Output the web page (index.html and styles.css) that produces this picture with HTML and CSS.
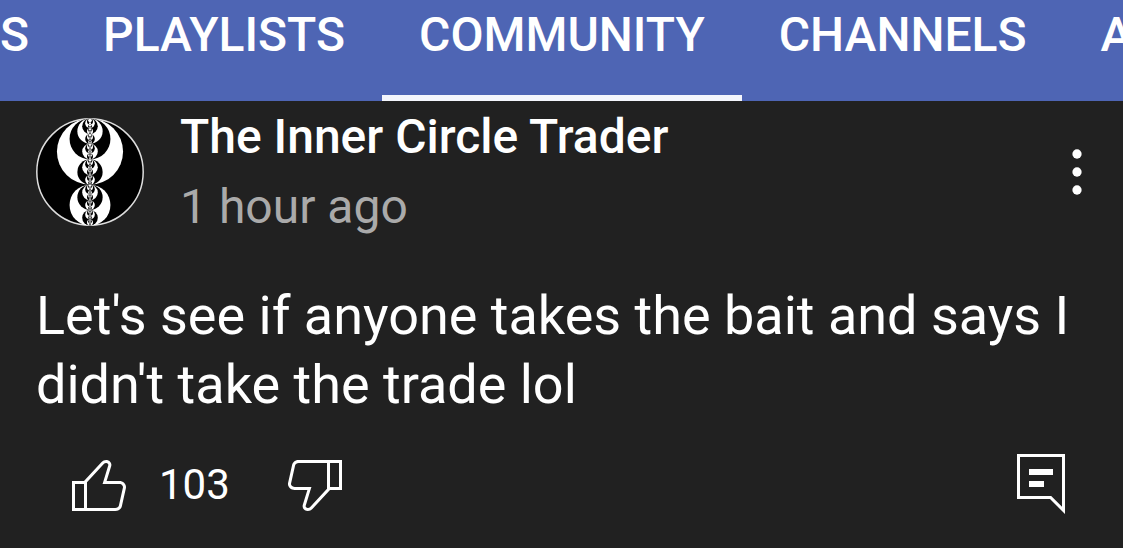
FILE: index.html
```html
<!DOCTYPE html>
<html lang="en">
<head>
  <meta charset="UTF-8">
  <meta name="viewport" content="width=device-width, initial-scale=1">
  <title>Community</title>
  <link rel="stylesheet" href="styles.css">
</head>
<body>
  <nav class="tabs">
    <a class="tab tab-first" href="#">S</a>
    <a class="tab" href="#">PLAYLISTS</a>
    <a class="tab active" href="#">COMMUNITY</a>
    <a class="tab" href="#">CHANNELS</a>
    <a class="tab" href="#">A</a>
  </nav>

  <article class="post">
    <header class="post-header">
      <!-- every circle holds two smaller ones of the other colour -->
      <svg class="avatar" viewBox="-54 -54 108 108" aria-hidden="true">
        <defs>
          <circle id="c7" cy="50" r="50" fill="#fff"/>
          <g id="c6"><circle cy="50" r="50" fill="#000"/><use href="#c7" transform="scale(.618)"/><use href="#c7" transform="translate(0 61.8) scale(.382)"/></g>
          <g id="c5"><circle cy="50" r="50" fill="#fff"/><use href="#c6" transform="scale(.618)"/><use href="#c6" transform="translate(0 61.8) scale(.382)"/></g>
          <g id="c4"><circle cy="50" r="50" fill="#000"/><use href="#c5" transform="scale(.618)"/><use href="#c5" transform="translate(0 61.8) scale(.382)"/></g>
          <g id="c3"><circle cy="50" r="50" fill="#fff"/><use href="#c4" transform="scale(.618)"/><use href="#c4" transform="translate(0 61.8) scale(.382)"/></g>
          <g id="c2"><circle cy="50" r="50" fill="#000"/><use href="#c3" transform="scale(.618)"/><use href="#c3" transform="translate(0 61.8) scale(.382)"/></g>
          <g id="c1"><circle cy="50" r="50" fill="#fff"/><use href="#c2" transform="scale(.618)"/><use href="#c2" transform="translate(0 61.8) scale(.382)"/></g>
        </defs>
        <circle r="53.2" fill="#000" stroke="#ddd" stroke-width="1.5"/>
        <g transform="translate(0 -53.5) scale(1.07)">
          <use href="#c1" transform="scale(.618)"/>
          <use href="#c1" transform="translate(0 61.8) scale(.382)"/>
        </g>
      </svg>
      <div class="author">
        <div class="name">The Inner Circle Trader</div>
        <div class="time">1 hour ago</div>
      </div>
      <button class="icon-button" aria-label="More">
        <svg class="icon" viewBox="0 0 24 24">
          <circle cx="12" cy="6" r="1.55"/>
          <circle cx="12" cy="12" r="1.55"/>
          <circle cx="12" cy="18" r="1.55"/>
        </svg>
      </button>
    </header>

    <p class="text">Let's see if anyone takes the bait and says I didn't take the trade lol</p>

    <footer class="actions">
      <button class="icon-button" aria-label="Like">
        <svg class="icon" viewBox="0 0 24 24">
          <path d="M18.77,11h-4.23l1.52-4.94C16.38,5.03,15.54,4,14.38,4c-0.58,0-1.14,0.24-1.52,0.65L7,11H3v10h4h1h9.43c1.06,0,1.98-0.67,2.19-1.61l1.34-6C21.23,12.15,20.18,11,18.77,11z M7,20H4v-8h3V20z M19.98,13.17l-1.34,6C18.54,19.65,18.03,20,17.43,20H8v-8.61l5.6-6.06C13.79,5.12,14.08,5,14.38,5c0.26,0,0.5,0.11,0.63,0.3c0.07,0.1,0.15,0.26,0.09,0.47l-1.52,4.94L13.18,12h1.35h4.23c0.41,0,0.8,0.17,1.03,0.46C19.92,12.61,20.05,12.86,19.98,13.17z"/>
        </svg>
      </button>
      <span class="count">103</span>
      <button class="icon-button" aria-label="Dislike">
        <svg class="icon" viewBox="0 0 24 24">
          <path transform="rotate(180 12 12.5)" d="M18.77,11h-4.23l1.52-4.94C16.38,5.03,15.54,4,14.38,4c-0.58,0-1.14,0.24-1.52,0.65L7,11H3v10h4h1h9.43c1.06,0,1.98-0.67,2.19-1.61l1.34-6C21.23,12.15,20.18,11,18.77,11z M7,20H4v-8h3V20z M19.98,13.17l-1.34,6C18.54,19.65,18.03,20,17.43,20H8v-8.61l5.6-6.06C13.79,5.12,14.08,5,14.38,5c0.26,0,0.5,0.11,0.63,0.3c0.07,0.1,0.15,0.26,0.09,0.47l-1.52,4.94L13.18,12h1.35h4.23c0.41,0,0.8,0.17,1.03,0.46C19.92,12.61,20.05,12.86,19.98,13.17z"/>
        </svg>
      </button>
      <button class="icon-button comment" aria-label="Comments">
        <svg class="icon" viewBox="0 0 24 24">
          <path fill-rule="evenodd" d="M4 2H20V22L15 17H4ZM5 3V16H15.4L19 19.6V3Z"/>
          <path d="M8 7h8v2H8zM8 11h5v2H8z"/>
        </svg>
      </button>
    </footer>
  </article>
</body>
</html>
```
FILE: styles.css
```css
body {
  margin: 0;
  background: #212121;
  color: #fff;
  font-family: Roboto, sans-serif;
}
.tabs {
  display: flex;
  background: #4e65b4;
  overflow: hidden;
}
.tab {
  flex: none;
  box-sizing: border-box;
  height: 101px;
  padding: 7px 37px 0;
  border-bottom: 6px solid transparent;
  color: #fff;
  font-size: 48px;
  font-weight: 500;
  line-height: 56px;
  text-decoration: none;
}
.tab-first {
  padding-left: 0;
}
.tab.active {
  border-bottom-color: #f4f6fc;
}
.post-header {
  display: flex;
  align-items: center;
  min-height: 142px;
  padding: 0 10px 0 36px;
}
.avatar {
  flex: none;
  width: 108px;
  height: 108px;
}
.author {
  flex: 1;
  padding-left: 36px;
  font-size: 48px;
  line-height: 70px;
}
.name {
  font-weight: 500;
}
.time {
  color: #aaa;
}
.icon-button {
  flex: none;
  padding: 0;
  border: none;
  background: none;
  color: #fff;
  cursor: pointer;
}
.icon {
  display: block;
  width: 72px;
  height: 72px;
  fill: currentColor;
}
.text {
  margin: 0;
  padding: 38px 36px 29px;
  font-size: 54px;
  line-height: 69px;
}
.actions {
  display: flex;
  align-items: center;
  padding: 0 46px 0 63px;
}
.count {
  padding: 0 49px 0 24px;
  font-size: 42px;
}
.comment {
  margin-left: auto;
}
```
